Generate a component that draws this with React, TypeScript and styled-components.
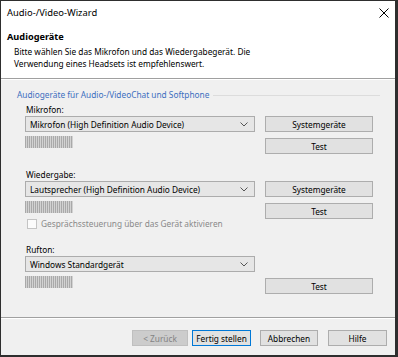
import React from "react";
import styled, { createGlobalStyle, css } from "styled-components";

const Global = createGlobalStyle`
  html, body { margin: 0; padding: 0; background: #ffffff; }
  body { font-family: "Noto Sans", "Open Sans", sans-serif; font-size: 8.3px; color: #000; }
`;

const Window = styled.div`
  box-sizing: border-box;
  width: 398px;
  height: 357px;
  border: 1px solid #2e2e2e;
  border-right-width: 3px;
  border-bottom-width: 2px;
  display: flex;
  flex-direction: column;
  background: #f0f0f0;
  overflow: hidden;
`;

const TitleBar = styled.div`
  height: 23px;
  background: #fff;
  display: flex;
  align-items: center;
  justify-content: space-between;
  padding: 0 6px 0 6px;
  font-size: 9.4px;
`;

const CloseIcon = styled.svg`
  width: 10px;
  height: 10px;
`;

const Header = styled.div`
  background: #fff;
  height: 54px;
  padding: 6px 6px 0 6px;
  box-sizing: border-box;
`;

const Heading = styled.div`
  font-weight: bold;
  font-size: 9.2px;
  line-height: 14px;
`;

const Description = styled.div`
  padding-left: 7px;
  margin-top: 2px;
  line-height: 12px;
`;

const Separator = styled.div`
  height: 0;
  border-top: 1px solid #a0a0a0;
  border-bottom: 1px solid #ffffff;
`;

const Body = styled.div`
  flex: 1;
  padding: 9px 15px 0 16px;
`;

const GroupHeader = styled.div`
  display: flex;
  align-items: center;
  gap: 4px;
  color: #3c6fbf;
  line-height: 12px;
  &::after {
    content: "";
    flex: 1;
    border-top: 1px solid #dcdcdc;
  }
`;

const Section = styled.div<{ $top: number }>`
  display: grid;
  grid-template-columns: 230px 108px;
  column-gap: 10px;
  padding-left: 8px;
  margin-top: ${(p) => p.$top}px;
`;

const Label = styled.div`
  grid-column: 1 / span 2;
  line-height: 12px;
  padding-left: 1px;
`;

const Combo = styled.div`
  box-sizing: border-box;
  height: 16px;
  background: #e6e6e6;
  border: 1px solid #acacac;
  display: flex;
  align-items: center;
  justify-content: space-between;
  padding: 0 6px 0 4px;
  white-space: nowrap;
`;

const Chevron = styled.svg`
  width: 8px;
  height: 5px;
`;

const Button = styled.div<{ $variant?: "default" | "disabled" }>`
  box-sizing: border-box;
  height: 16px;
  background: #e1e1e1;
  border: 1px solid #adadad;
  display: flex;
  align-items: center;
  justify-content: center;
  white-space: nowrap;
  ${(p) =>
    p.$variant === "default" &&
    css`
      border-color: #0078d7;
      box-shadow: inset 0 0 0 1px #e1e1e1;
    `}
  ${(p) =>
    p.$variant === "disabled" &&
    css`
      background: #cccccc;
      border-color: #bfbfbf;
      color: #838383;
    `}
`;

const SideButton = styled(Button)<{ $offset?: number }>`
  margin-top: ${(p) => p.$offset ?? 0}px;
`;

const Meter = styled.div`
  width: 48px;
  height: 12px;
  margin-top: 4px;
  background: repeating-linear-gradient(90deg, #a9a9a9 0 1px, #d2d2d2 1px 2px);
`;

const LeftCol = styled.div`
  display: flex;
  flex-direction: column;
  grid-column: 1;
`;

const RightCol = styled.div`
  display: flex;
  flex-direction: column;
  grid-column: 2;
`;

const CheckRow = styled.div`
  display: flex;
  align-items: center;
  gap: 4px;
  color: #8a8a8a;
  margin-top: 5px;
  padding-left: 2px;
`;

const CheckBox = styled.div`
  box-sizing: border-box;
  width: 10px;
  height: 10px;
  border: 1px solid #c4c4c4;
  background: #fbfbfb;
`;

const Footer = styled.div`
  height: 36px;
  display: flex;
  justify-content: flex-end;
  align-items: flex-start;
  padding: 11px 8px 0 0;
  box-sizing: border-box;
`;

const FooterButton = styled(Button)<{ $w: number; $gap: number }>`
  width: ${(p) => p.$w}px;
  margin-left: ${(p) => p.$gap}px;
`;

const ChevronIcon = () => (
  <Chevron viewBox="0 0 8 5">
    <path d="M0.5 0.5 L4 4 L7.5 0.5" fill="none" stroke="#555" strokeWidth="1" />
  </Chevron>
);

export default function App() {
  return (
    <>
      <Global />
      <Window>
        <TitleBar>
          <span>Audio-/Video-Wizard</span>
          <CloseIcon viewBox="0 0 10 10">
            <path d="M0.5 0.5 L9.5 9.5 M9.5 0.5 L0.5 9.5" stroke="#000" strokeWidth="1" />
          </CloseIcon>
        </TitleBar>
        <Header>
          <Heading>Audiogeräte</Heading>
          <Description>
            Bitte wählen Sie das Mikrofon und das Wiedergabegerät. Die
            <br />
            Verwendung eines Headsets ist empfehlenswert.
          </Description>
        </Header>
        <Separator />
        <Body>
          <GroupHeader>Audiogeräte für Audio-/VideoChat und Softphone</GroupHeader>
          <Section $top={3}>
            <Label>Mikrofon:</Label>
            <LeftCol>
              <Combo>
                <span>Mikrofon (High Definition Audio Device)</span>
                <ChevronIcon />
              </Combo>
              <Meter />
            </LeftCol>
            <RightCol>
              <SideButton>Systemgeräte</SideButton>
              <SideButton $offset={6}>Test</SideButton>
            </RightCol>
          </Section>
          <Section $top={15}>
            <Label>Wiedergabe:</Label>
            <LeftCol>
              <Combo>
                <span>Lautsprecher (High Definition Audio Device)</span>
                <ChevronIcon />
              </Combo>
              <Meter />
              <CheckRow>
                <CheckBox />
                <span>Gesprächssteuerung über das Gerät aktivieren</span>
              </CheckRow>
            </LeftCol>
            <RightCol>
              <SideButton>Systemgeräte</SideButton>
              <SideButton $offset={6}>Test</SideButton>
            </RightCol>
          </Section>
          <Section $top={15}>
            <Label>Rufton:</Label>
            <LeftCol>
              <Combo>
                <span>Windows Standardgerät</span>
                <ChevronIcon />
              </Combo>
              <Meter />
            </LeftCol>
            <RightCol>
              <SideButton $offset={22}>Test</SideButton>
            </RightCol>
          </Section>
        </Body>
        <Separator />
        <Footer>
          <FooterButton $variant="disabled" $w={56} $gap={0}>&lt; Zurück</FooterButton>
          <FooterButton $variant="default" $w={59} $gap={4}>Fertig stellen</FooterButton>
          <FooterButton $w={58} $gap={9}>Abbrechen</FooterButton>
          <FooterButton $w={59} $gap={10}>Hilfe</FooterButton>
        </Footer>
      </Window>
    </>
  );
}
